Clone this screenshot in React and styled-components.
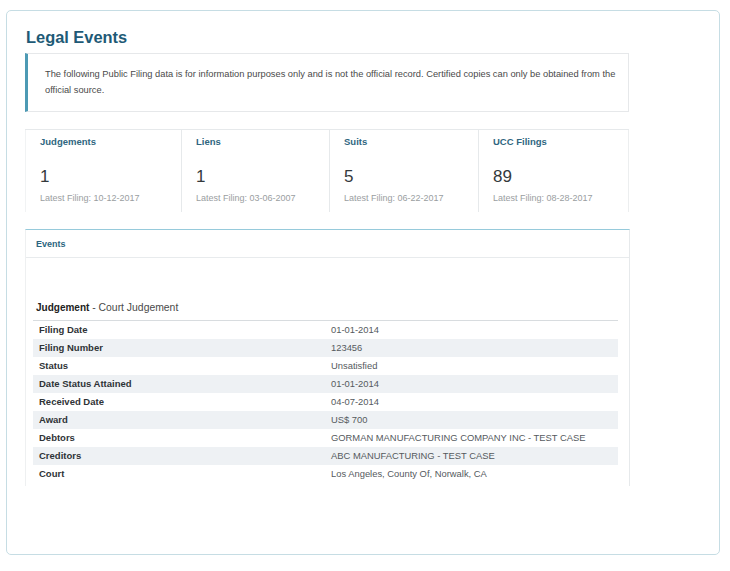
import React from 'react'
import styled, { createGlobalStyle } from "styled-components";

const Global = createGlobalStyle`
  body {
    margin: 0;
    background: #fff;
    font-family: "Liberation Sans", Arial, sans-serif;
  }
`;

const Card = styled.div`
  margin: 10px 0 0 6px;
  width: 714px;
  height: 545px;
  box-sizing: border-box;
  border: 1px solid #c6dde4;
  border-radius: 5px;
  padding: 15px 0 0 18px;
`;

const Title = styled.h1`
  margin: 0 0 5px 1px;
  font-size: 16.4px;
  line-height: 22px;
  font-weight: 700;
  color: #1e5a76;
`;

const Content = styled.div`
  width: 604px;
`;

const Notice = styled.div`
  box-sizing: border-box;
  height: 59px;
  border: 1px solid #e6e8ea;
  border-left: 3px solid #4d9ab4;
  padding: 12px 12px 0 17px;
  font-size: 9.3px;
  line-height: 16px;
  color: #4a4a4a;
`;

const Stats = styled.div`
  display: grid;
  grid-template-columns: 156px 148px 149px 151px;
  margin-top: 17px;
  height: 82px;
  border-top: 1px solid #e6e9eb;
`;

const Stat = styled.div`
  padding: 6px 0 0 14px;
  border-left: 1px solid ${(p) => (p.first ? "#f1f3f4" : "#e6e9eb")};
  border-right: ${(p) => (p.last ? "1px solid #eceeef" : "none")};
`;

const StatLabel = styled.div`
  font-size: 9.5px;
  line-height: 12px;
  font-weight: 700;
  color: #2f6680;
`;

const StatValue = styled.div`
  margin-top: 19px;
  font-size: 17px;
  line-height: 20px;
  color: #34393c;
`;

const StatDate = styled.div`
  margin-top: 5px;
  font-size: 9px;
  line-height: 12px;
  color: #9a9ea1;
`;

const Panel = styled.div`
  margin-top: 17px;
  width: 605px;
  height: 257px;
  box-sizing: border-box;
  border-top: 1px solid #96cadb;
  border-left: 1px solid #eef0f1;
  border-right: 1px solid #e6e9eb;
`;

const PanelHeader = styled.div`
  height: 28px;
  box-sizing: border-box;
  padding: 8px 0 0 10px;
  border-bottom: 1px solid #e8ebed;
  font-size: 9px;
  line-height: 12px;
  font-weight: 700;
  color: #2c6580;
`;

const PanelBody = styled.div`
  padding: 43px 11px 0 7px;
`;

const EventTitle = styled.div`
  padding-left: 3px;
  font-size: 10.4px;
  line-height: 14px;
  color: #4a4a4a;
  margin-bottom: 5px;

  strong {
    font-size: 10px;
    color: #222;
  }
`;

const Table = styled.table`
  width: 585px;
  border-collapse: collapse;
  border-top: 1px solid #d8dcdf;
`;

const Row = styled.tr`
  height: 18px;
  background: ${(p) => (p.striped ? "#eef1f4" : "transparent")};
`;

const Key = styled.td`
  width: 286px;
  padding: 0 0 0 6px;
  font-size: 9.5px;
  font-weight: 700;
  color: #2f3336;
`;

const Value = styled.td`
  padding: 0 0 0 6px;
  font-size: 9.4px;
  color: #555a5e;
`;

const stats = [
  { label: "Judgements", value: "1", date: "10-12-2017" },
  { label: "Liens", value: "1", date: "03-06-2007" },
  { label: "Suits", value: "5", date: "06-22-2017" },
  { label: "UCC Filings", value: "89", date: "08-28-2017" },
];

const rows = [
  ["Filing Date", "01-01-2014"],
  ["Filing Number", "123456"],
  ["Status", "Unsatisfied"],
  ["Date Status Attained", "01-01-2014"],
  ["Received Date", "04-07-2014"],
  ["Award", "US$ 700"],
  ["Debtors", "GORMAN MANUFACTURING COMPANY INC - TEST CASE"],
  ["Creditors", "ABC MANUFACTURING - TEST CASE"],
  ["Court", "Los Angeles, County Of, Norwalk, CA"],
];

const App = () => {
  return (
    <>
      <Global />
      <Card>
        <Title>Legal Events</Title>
        <Content>
          <Notice>
            The following Public Filing data is for information purposes only and is not the official record. Certified copies can only be obtained from the official source.
          </Notice>
          <Stats>
            {stats.map((s, i) => (
              <Stat key={s.label} first={i === 0} last={i === stats.length - 1}>
                <StatLabel>{s.label}</StatLabel>
                <StatValue>{s.value}</StatValue>
                <StatDate>Latest Filing: {s.date}</StatDate>
              </Stat>
            ))}
          </Stats>
          <Panel>
            <PanelHeader>Events</PanelHeader>
            <PanelBody>
              <EventTitle>
                <strong>Judgement</strong> - Court Judgement
              </EventTitle>
              <Table>
                <tbody>
                  {rows.map(([k, v], i) => (
                    <Row key={k} striped={i % 2 === 1}>
                      <Key>{k}</Key>
                      <Value>{v}</Value>
                    </Row>
                  ))}
                </tbody>
              </Table>
            </PanelBody>
          </Panel>
        </Content>
      </Card>
    </>
  );
}

export default App
